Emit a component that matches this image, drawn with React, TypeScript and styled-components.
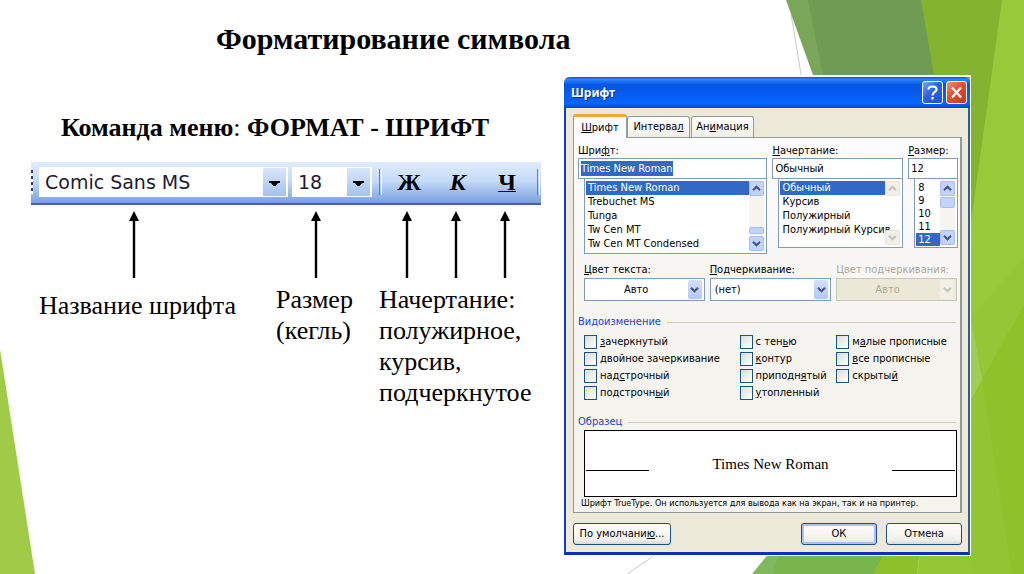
import React from "react";
import styled, { createGlobalStyle, css } from "styled-components";

const ui = `"DejaVu Sans Condensed", "DejaVu Sans", sans-serif`;
const serif = `"Liberation Serif", "Times New Roman", serif`;

const GlobalStyle = createGlobalStyle`
  *, *::before, *::after { box-sizing: border-box; }
  body { margin: 0; background: #fff; color: #000; font-family: ${serif}; }
  button, input, select { font: inherit; color: inherit; margin: 0; padding: 0; border-radius: 0; }
  u { text-underline-offset: 1px; }
`;

/* ---------- slide ---------- */

const Slide = styled.main`
  position: relative;
  isolation: isolate;
  min-height: 100vh;
  display: grid;
  grid-template-columns: minmax(0, 564fr) minmax(0, 407fr) minmax(0, 53fr);
  align-items: start;
  overflow: hidden;
`;

const Backdrop = styled.svg`
  position: absolute;
  inset: 0;
  z-index: -1;
  width: 100%;
  height: 100%;
`;

const Lesson = styled.section`
  padding: 20px 23px 0 31px;
`;

const Title = styled.h1`
  margin: 0 0 0 185px;
  font-size: 30px;
  line-height: 38px;
  white-space: nowrap;
`;

const Command = styled.p`
  margin: 54px 0 18px 30px;
  font-size: 26px;
  line-height: 32px;
  white-space: nowrap;
`;

const Toolbar = styled.div`
  display: flex;
  align-items: center;
  height: 43px;
  padding: 0 1px 2px 0;
  background: linear-gradient(#dfebfc, #c6dbf8 45%, #86abe6 90%, #7a9fdc);
  border-bottom: 2px solid #46629f;
  font-family: "DejaVu Sans", sans-serif;
`;

const Grip = styled.span`
  width: 2px;
  height: 24px;
  margin-right: 6px;
  background: repeating-linear-gradient(#27407c 0 3px, #fff 3px 6px);
`;

const ToolCombo = styled.div<{ $wide?: boolean }>`
  display: flex;
  width: ${(p) => (p.$wide ? "249px" : "80px")};
  height: 30px;
  margin-right: ${(p) => (p.$wide ? "4px" : "7px")};
  padding: 1px 2px 1px 6px;
  background: #fff;

  input {
    flex: 1;
    min-width: 0;
    border: 0;
    background: none;
    outline: 0;
    font-size: 19px;
    color: #1d1d33;
  }
  button {
    width: 23px;
    border: 0;
    background: linear-gradient(#d9e7fb, #a5c1ee);
  }
`;

const Rule = styled.span`
  width: 3px;
  height: 26px;
  border-left: 1px solid #5a7fc4;
  border-right: 1px solid #fff;
`;

const StyleButtons = styled.div`
  flex: 1;
  display: flex;
  gap: 17px;
  padding-left: 11px;
`;

const StyleButton = styled.button<{ $italic?: boolean; $underline?: boolean }>`
  width: 32px;
  height: 30px;
  border: 0;
  background: none;
  font: ${(p) => (p.$italic ? "italic" : "normal")} bold 24px/26px ${serif};
  text-decoration: ${(p) => (p.$underline ? "underline" : "none")};
  text-decoration-thickness: 1px;
`;

const Callouts = styled.div`
  display: grid;
  grid-template-columns: 245px 103px minmax(0, 1fr);
  padding-top: 6px;
`;

const Arrows = styled.div<{ $inset: number }>`
  display: flex;
  gap: 39px;
  padding-left: ${(p) => p.$inset}px;
`;

const CalloutText = styled.p<{ $lowered?: boolean }>`
  margin: 0;
  padding: ${(p) => (p.$lowered ? "12px 0 0 8px" : "6px 0 0")};
  font-size: 26px;
  line-height: 31px;
`;

/* ---------- dialog ---------- */

const Dialog = styled.section`
  margin-top: 75px;
  border: solid #fff;
  border-width: 2px 1px 1px 0;
  font-family: ${ui};
  font-size: 11px;
  line-height: 14px;
`;

const Frame = styled.div`
  border: 2px solid #0a3fd0;
  border-top: 0;
  border-right-color: #2c5c9c;
  border-bottom: 3px solid #0831b8;
  border-radius: 6px 6px 0 0;
  background: #ece9d8;
`;

const TitleBar = styled.header`
  display: flex;
  align-items: center;
  gap: 3px;
  height: 31px;
  margin: 0 -2px;
  padding: 0 3px 0 7px;
  border-radius: 6px 6px 0 0;
  background: linear-gradient(#0a50d8, #2a86ff 8%, #0455e4 25%, #0560f6 70%, #0668ff 85%, #0344c8);

  h2 {
    flex: 1;
    margin: 0;
    color: #fff;
    font: bold 12px/18px "Noto Sans", sans-serif;
    text-shadow: 1px 1px #0a2a80;
  }
`;

const CaptionButton = styled.button<{ $close?: boolean }>`
  display: grid;
  place-items: center;
  width: 21px;
  height: 23px;
  border: 1px solid #fff;
  border-radius: 3px;
  background: ${(p) =>
    p.$close
      ? "linear-gradient(135deg, #f0907a, #e0502e 45%, #c23a18)"
      : "linear-gradient(135deg, #7da2f5, #2f62e0 45%, #1f4fd0)"};
`;

const Body = styled.div`
  padding: 7px 6px 7px 7px;
`;

const Tabs = styled.div`
  display: flex;
  align-items: flex-end;
  height: 22px;
`;

const Tab = styled.button<{ $active?: boolean }>`
  height: 21px;
  width: 63px;
  margin-right: 1px;
  border: 1px solid #919b9c;
  border-bottom: 0;
  border-radius: 3px 3px 0 0;
  background: linear-gradient(#fff, #f0efe6);
  white-space: nowrap;
  ${(p) =>
    p.$active &&
    css`
      position: relative;
      width: 54px;
      height: 24px;
      margin: 0 0 -1px;
      border-top: 3px solid #f0a72e;
      background: #fcfcfe;
    `}
`;

const Panel = styled.div`
  border: 1px solid #919b9c;
  border-right-width: 2px;
  background: linear-gradient(#fcfcfe, #f4f3ee 60%);
  padding: 6px 2px 2px 4px;
`;

const Columns = styled.div`
  display: grid;
  grid-template-columns: minmax(0, 190fr) minmax(0, 131fr) minmax(0, 50fr);
  column-gap: 5px;
  align-items: start;
`;

const Field = styled.div`
  label { display: block; }
`;

const TextBox = styled.input`
  display: block;
  width: 100%;
  height: 21px;
  border: 1px solid #7f9db9;
  background: #fff;
  padding-left: 2px !important;
`;

const SelectedBox = styled.div`
  display: flex;
  align-items: center;
  height: 21px;
  padding-left: 2px;
  border: 1px solid #7f9db9;
  background: #fff;

  input {
    width: 92px;
    height: 15px;
    border: 0;
    background: #316ac5;
    color: #fff;
  }
`;

const ListFrame = styled.div<{ $tall?: boolean }>`
  display: flex;
  height: ${(p) => (p.$tall ? "75px" : "69px")};
  margin-left: 6px;
  padding: 1px 2px 2px 1px;
  border: 1px solid #7f9db9;
  border-top: 0;
  background: #fff;
`;

const Options = styled.ul<{ $row: number }>`
  flex: 1;
  min-width: 0;
  margin: 0;
  padding: 1px 0 0;
  list-style: none;
  white-space: nowrap;
  line-height: ${(p) => p.$row}px;

  li { padding-left: 2px; }
  li[aria-selected="true"] { background: #316ac5; color: #fff; }
`;

const Rail = styled.div<{ $thumbEnd?: boolean; $idle?: boolean }>`
  display: flex;
  flex-direction: column;
  gap: 1px;
  width: 15px;
  padding-top: 1px;
  background: ${(p) => (p.$idle ? "none" : "#f5f4f0")};

  i {
    height: ${(p) => (p.$thumbEnd ? "7px" : "11px")};
    margin-top: ${(p) => (p.$thumbEnd ? "auto" : "0")};
    border: 1px solid #a9bdf0;
    border-radius: 2px;
    background: #c3d3fd;
  }
  button:last-child { margin-top: ${(p) => (p.$thumbEnd ? "1px" : "auto")}; }
`;

const RailButton = styled.button`
  display: grid;
  place-items: center;
  height: 15px;
  border: 1px solid #a9bdf0;
  border-radius: 2px;
  background: #c3d3fd;
  color: #3f5680;
  &:disabled { border-color: #e6e4d8; background: #f0efe8; color: #c6c4b4; }
`;

const Selects = styled.div`
  display: grid;
  grid-template-columns: minmax(0, 121fr) minmax(0, 122fr) minmax(0, 121fr);
  gap: 5px;
  padding: 9px 1px 0 6px;
`;

const Picker = styled.div<{ $disabled?: boolean }>`
  color: ${(p) => (p.$disabled ? "#aca899" : "#000")};
  label { display: block; white-space: nowrap; }
`;

const PickerBox = styled.div<{ $disabled?: boolean; $inset: number }>`
  display: grid;
  grid-template-columns: minmax(0, 1fr) 14px;
  align-items: stretch;
  height: 23px;
  margin-top: 1px;
  padding: 1px 2px 1px 0;
  border: 1px solid ${(p) => (p.$disabled ? "#c9c7ba" : "#7f9db9")};
  background: ${(p) => (p.$disabled ? "#ebe8d8" : "#fff")};

  select {
    grid-area: 1 / 1 / 2 / 3;
    appearance: none;
    border: 0;
    outline: 0;
    background: none;
    opacity: 1;
    padding-left: ${(p) => p.$inset}px;
  }
  span {
    grid-area: 1 / 2;
    display: grid;
    place-items: center;
    pointer-events: none;
    border-radius: 2px;
    background: ${(p) => (p.$disabled ? "#f2f0e6" : "linear-gradient(#d3dffd, #b3c8f8)")};
    color: ${(p) => (p.$disabled ? "#c6c4b4" : "#3f5680")};
  }
`;

const GroupTitle = styled.h3`
  display: flex;
  align-items: center;
  gap: 6px;
  margin: 0;
  padding-right: 2px;
  color: #1a44cc;
  font-size: 11px;
  font-weight: normal;
  line-height: 14px;
  &::after { content: ""; flex: 1; height: 1px; background: #d0d0bf; }
`;

const Effects = styled.div`
  display: grid;
  grid-template-columns: minmax(0, 156fr) minmax(0, 97fr) minmax(0, 122fr);
  padding: 4px 0 14px 6px;
`;

const Group = styled.section<{ $spaced?: boolean }>`
  padding-top: ${(p) => (p.$spaced ? "14px" : "0")};
`;

const Check = styled.label`
  display: flex;
  align-items: center;
  gap: 3px;
  height: 17px;
  white-space: nowrap;

  input {
    appearance: none;
    width: 13px;
    height: 14px;
    flex: none;
    border: 1px solid #1c5180;
    background: linear-gradient(135deg, #dcdcd7, #fff);
  }
`;

const Preview = styled.div`
  display: flex;
  align-items: center;
  justify-content: space-between;
  height: 67px;
  margin: 1px 1px 0 6px;
  padding: 0 1px;
  border: 1px solid #000;
  background: #fff;
  font: 15px/20px ${serif};

  &::before, &::after {
    content: "";
    width: 63px;
    margin-top: 13px;
    border-top: 1px solid #000;
  }
`;

const Note = styled.p`
  margin: 0;
  padding-left: 3px;
  font-size: 9px;
  line-height: 13px;
  white-space: nowrap;
`;

const Footer = styled.footer`
  display: flex;
  gap: 9px;
  padding-top: 10px;
`;

const PushButton = styled.button<{ $primary?: boolean; $wide?: boolean }>`
  width: ${(p) => (p.$wide ? "98px" : "76px")};
  height: 22px;
  margin-right: ${(p) => (p.$wide ? "auto" : "0")};
  border: 1px solid #1c4f86;
  border-radius: 3px;
  background: linear-gradient(#fff, #f0efe9 80%, #dcd8cc);
  box-shadow: ${(p) => (p.$primary ? "inset 0 0 0 2px #a9c3f2" : "none")};
`;

/* ---------- drawings ---------- */

const Chevron = ({ up }: { up?: boolean }) => (
  <svg width="9" height="7" viewBox="0 0 9 7" aria-hidden="true">
    <path d={up ? "M1 5.2 4.5 1.8 8 5.2" : "M1 1.8 4.5 5.2 8 1.8"} fill="none" stroke="currentColor" strokeWidth="2.2" />
  </svg>
);

const DropMark = () => (
  <svg width="11" height="6" viewBox="0 0 11 6" aria-hidden="true">
    <path d="M0 0H11V2H9L6.5 5H4.5L2 2H0Z" />
  </svg>
);

const UpArrow = () => (
  <svg width="10" height="67" viewBox="0 0 10 67" aria-hidden="true">
    <path d="M5 0 10 10H6.2V67H3.8V10H0Z" />
  </svg>
);

const Facets = () => (
  <Backdrop viewBox="0 0 1024 574" preserveAspectRatio="none" aria-hidden="true">
    <path d="M791 14 802 80M655 555 627 574" stroke="#c9c9c9" fill="none" />
    <path d="M0 349 35 574H0Z" fill="#9fcb46" />
    <path d="M786 0H930L940 100H822Z" fill="#7aa65a" />
    <path d="M808 0H930L940 100H828Z" fill="#6f9c52" />
    <path d="M752 574 770 552H900V574Z" fill="#80b95f" />
    <path d="M773 574 779 552H900V574Z" fill="#79b54c" />
    <path d="M921 0H1024V230H960Z" fill="#83b32f" />
    <path d="M1002 0H1024V574H917L921 540H960V300Z" fill="#97c93b" />
    <path d="M873 574 886 550H920L917 574Z" fill="#8ec02b" />
    <path d="M1024 258 960 330V574H1024Z" fill="#94c637" />
    <path d="M917 574 921 550H960V574Z" fill="#95c735" />
    <path d="M1024 305 982 380 965 410V550L974 574H1024Z" fill="#92c532" />
    <path d="M1024 305 982 380 1012 574H1024Z" fill="#8ec12a" />
    <path d="M971 318 982 380 971 400Z" fill="#9fcd58" />
  </Backdrop>
);

/* ---------- data ---------- */

const fonts = ["Times New Roman", "Trebuchet MS", "Tunga", "Tw Cen MT", "Tw Cen MT Condensed"];
const styles = ["Обычный", "Курсив", "Полужирный", "Полужирный Курсив"];
const sizes = ["8", "9", "10", "11", "12"];

const effects: React.ReactNode[][] = [
  [
    <><u>з</u>ачеркнутый</>,
    <><u>д</u>войное зачеркивание</>,
    <>над<u>с</u>трочный</>,
    <>подстрочн<u>ы</u>й</>,
  ],
  [<>с тен<u>ь</u>ю</>, <><u>к</u>онтур</>, <>приподн<u>я</u>тый</>, <><u>у</u>топленный</>],
  [<>м<u>а</u>лые прописные</>, <><u>в</u>се прописные</>, <>скрыты<u>й</u></>],
];

interface ListProps {
  label: string;
  items: string[];
  selected: string;
  row: number;
  tall?: boolean;
  disabled?: boolean;
}

const ListBox = ({ label, items, selected, row, tall, disabled }: ListProps) => (
  <ListFrame $tall={tall}>
    <Options $row={row} role="listbox" aria-label={label}>
      {items.map((item) => (
        <li key={item} role="option" aria-selected={item === selected}>{item}</li>
      ))}
    </Options>
    <Rail $thumbEnd={tall} $idle={disabled}>
      <RailButton type="button" aria-label="Вверх" disabled={disabled}><Chevron up /></RailButton>
      {!disabled && <i />}
      <RailButton type="button" aria-label="Вниз" disabled={disabled}><Chevron /></RailButton>
    </Rail>
  </ListFrame>
);

interface SelectProps {
  id: string;
  label: React.ReactNode;
  value: string;
  inset: number;
  disabled?: boolean;
}

const SelectField = ({ id, label, value, inset, disabled }: SelectProps) => (
  <Picker $disabled={disabled}>
    <label htmlFor={id}>{label}</label>
    <PickerBox $disabled={disabled} $inset={inset}>
      <select id={id} disabled={disabled}><option>{value}</option></select>
      <span><Chevron /></span>
    </PickerBox>
  </Picker>
);

const FontDialog = () => (
  <Dialog role="dialog" aria-labelledby="dialog-title">
    <Frame>
      <TitleBar>
        <h2 id="dialog-title">Шрифт</h2>
        <CaptionButton type="button" aria-label="Справка">
          <svg width="11" height="15" viewBox="0 0 11 15" fill="none" stroke="#fff" strokeWidth="2.2">
            <path d="M1.5 4.5C1.5 .5 9.5 .5 9.5 4.5 9.5 7 5.5 7 5.5 10.5M5.5 12V14.5" />
          </svg>
        </CaptionButton>
        <CaptionButton type="button" aria-label="Закрыть" $close>
          <svg width="11" height="13" viewBox="0 0 11 13" stroke="#fff" strokeWidth="2.2">
            <path d="M1 1.5 10 11.5M10 1.5 1 11.5" />
          </svg>
        </CaptionButton>
      </TitleBar>
      <Body>
        <Tabs role="tablist">
          <Tab type="button" role="tab" aria-selected="true" $active><u>Ш</u>рифт</Tab>
          <Tab type="button" role="tab" aria-selected="false">Интерва<u>л</u></Tab>
          <Tab type="button" role="tab" aria-selected="false">Ан<u>и</u>мация</Tab>
        </Tabs>
        <Panel>
          <Columns>
            <Field>
              <label htmlFor="font">Шри<u>ф</u>т:</label>
              <SelectedBox><input id="font" defaultValue="Times New Roman" /></SelectedBox>
              <ListBox label="Шрифт" items={fonts} selected="Times New Roman" row={14} tall />
            </Field>
            <Field>
              <label htmlFor="style"><u>Н</u>ачертание:</label>
              <TextBox id="style" defaultValue="Обычный" />
              <ListBox label="Начертание" items={styles} selected="Обычный" row={14} disabled />
            </Field>
            <Field>
              <label htmlFor="size"><u>Р</u>азмер:</label>
              <TextBox id="size" defaultValue="12" />
              <ListBox label="Размер" items={sizes} selected="12" row={13} />
            </Field>
          </Columns>
          <Selects>
            <SelectField id="color" label={<><u>Ц</u>вет текста:</>} value="Авто" inset={39} />
            <SelectField id="underline" label={<><u>П</u>одчеркивание:</>} value="(нет)" inset={4} />
            <SelectField id="underline-color" label="Цвет подчеркивания:" value="Авто" inset={38} disabled />
          </Selects>
          <Group $spaced>
            <GroupTitle>Видоизменение</GroupTitle>
            <Effects>
              {effects.map((column, c) => (
                <div key={c}>
                  {column.map((text, r) => (
                    <Check key={r}><input type="checkbox" /><span>{text}</span></Check>
                  ))}
                </div>
              ))}
            </Effects>
          </Group>
          <Group>
            <GroupTitle>Образец</GroupTitle>
            <Preview>Times New Roman</Preview>
            <Note>Шрифт TrueType. Он используется для вывода как на экран, так и на принтер.</Note>
          </Group>
        </Panel>
        <Footer>
          <PushButton type="button" $wide>По умолчани<u>ю</u>...</PushButton>
          <PushButton type="button" $primary>ОК</PushButton>
          <PushButton type="button">Отмена</PushButton>
        </Footer>
      </Body>
    </Frame>
  </Dialog>
);

export default function App() {
  return (
    <>
      <GlobalStyle />
      <Slide>
        <Facets />
        <Lesson>
          <Title>Форматирование символа</Title>
          <Command><b>Команда меню</b>: <b>ФОРМАТ - ШРИФТ</b></Command>
          <Toolbar role="toolbar" aria-label="Форматирование">
            <Grip />
            <ToolCombo $wide>
              <input aria-label="Название шрифта" defaultValue="Comic Sans MS" />
              <button type="button" aria-label="Список шрифтов"><DropMark /></button>
            </ToolCombo>
            <ToolCombo>
              <input aria-label="Размер шрифта" defaultValue="18" />
              <button type="button" aria-label="Список размеров"><DropMark /></button>
            </ToolCombo>
            <Rule />
            <StyleButtons>
              <StyleButton type="button">Ж</StyleButton>
              <StyleButton type="button" $italic>К</StyleButton>
              <StyleButton type="button" $underline>Ч</StyleButton>
            </StyleButtons>
            <Rule />
          </Toolbar>
          <Callouts>
            <div>
              <Arrows $inset={98}><UpArrow /></Arrows>
              <CalloutText $lowered>Название шрифта</CalloutText>
            </div>
            <div>
              <Arrows $inset={35}><UpArrow /></Arrows>
              <CalloutText>Размер<br />(кегль)</CalloutText>
            </div>
            <div>
              <Arrows $inset={23}><UpArrow /><UpArrow /><UpArrow /></Arrows>
              <CalloutText>Начертание:<br />полужирное,<br />курсив,<br />подчеркнутое</CalloutText>
            </div>
          </Callouts>
        </Lesson>
        <FontDialog />
      </Slide>
    </>
  );
}
